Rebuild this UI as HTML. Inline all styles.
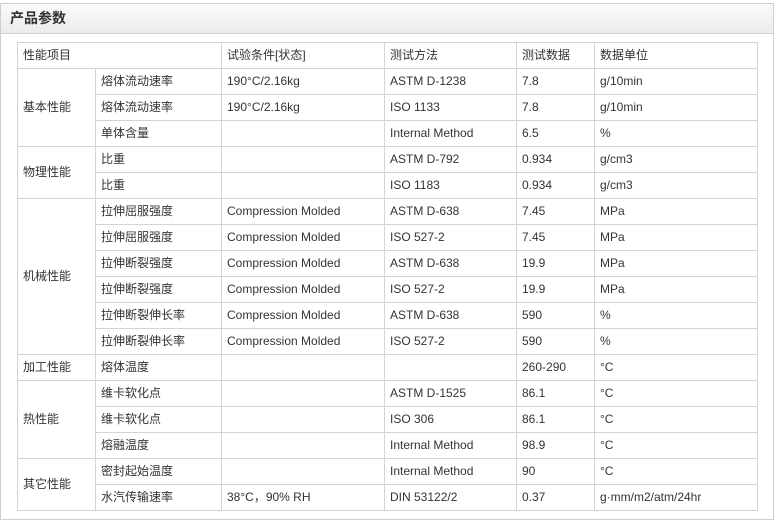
<!DOCTYPE html><html><head><meta charset="utf-8"><style>
body{margin:0;background:#fff;font-family:"Liberation Sans","Noto Sans CJK SC",sans-serif;font-size:12px;color:#333}
.box{position:absolute;left:0;top:3px;width:772px;height:515px;border:1px solid #cfcfcf}
.hd{height:29px;border-bottom:1px solid #cfcfcf;background:linear-gradient(#fafafa,#ececec);font-weight:bold;font-size:14px;line-height:29px;padding-left:9px;color:#333}
table{position:absolute;left:17px;top:42px;border-collapse:collapse;table-layout:fixed}
td{border:1px solid #d4d4d4;height:25px;padding:0 0 0 5px;white-space:nowrap;line-height:25px}
</style></head><body><div class="box"><div class="hd">产品参数</div></div>
<table>
<colgroup><col style="width:78px"><col style="width:126px"><col style="width:163px"><col style="width:132px"><col style="width:78px"><col style="width:163px"></colgroup>
<tr><td colspan="2">性能项目</td><td>试验条件[状态]</td><td>测试方法</td><td>测试数据</td><td>数据单位</td></tr>
<tr><td rowspan="3">基本性能</td><td>熔体流动速率</td><td>190°C/2.16kg</td><td>ASTM D-1238</td><td>7.8</td><td>g/10min</td></tr>
<tr><td>熔体流动速率</td><td>190°C/2.16kg</td><td>ISO 1133</td><td>7.8</td><td>g/10min</td></tr>
<tr><td>单体含量</td><td></td><td>Internal Method</td><td>6.5</td><td>%</td></tr>
<tr><td rowspan="2">物理性能</td><td>比重</td><td></td><td>ASTM D-792</td><td>0.934</td><td>g/cm3</td></tr>
<tr><td>比重</td><td></td><td>ISO 1183</td><td>0.934</td><td>g/cm3</td></tr>
<tr><td rowspan="6">机械性能</td><td>拉伸屈服强度</td><td>Compression Molded</td><td>ASTM D-638</td><td>7.45</td><td>MPa</td></tr>
<tr><td>拉伸屈服强度</td><td>Compression Molded</td><td>ISO 527-2</td><td>7.45</td><td>MPa</td></tr>
<tr><td>拉伸断裂强度</td><td>Compression Molded</td><td>ASTM D-638</td><td>19.9</td><td>MPa</td></tr>
<tr><td>拉伸断裂强度</td><td>Compression Molded</td><td>ISO 527-2</td><td>19.9</td><td>MPa</td></tr>
<tr><td>拉伸断裂伸长率</td><td>Compression Molded</td><td>ASTM D-638</td><td>590</td><td>%</td></tr>
<tr><td>拉伸断裂伸长率</td><td>Compression Molded</td><td>ISO 527-2</td><td>590</td><td>%</td></tr>
<tr><td>加工性能</td><td>熔体温度</td><td></td><td></td><td>260-290</td><td>°C</td></tr>
<tr><td rowspan="3">热性能</td><td>维卡软化点</td><td></td><td>ASTM D-1525</td><td>86.1</td><td>°C</td></tr>
<tr><td>维卡软化点</td><td></td><td>ISO 306</td><td>86.1</td><td>°C</td></tr>
<tr><td>熔融温度</td><td></td><td>Internal Method</td><td>98.9</td><td>°C</td></tr>
<tr><td rowspan="2">其它性能</td><td>密封起始温度</td><td></td><td>Internal Method</td><td>90</td><td>°C</td></tr>
<tr><td>水汽传输速率</td><td>38°C，90% RH</td><td>DIN 53122/2</td><td>0.37</td><td>g·mm/m2/atm/24hr</td></tr>
</table></body></html>
